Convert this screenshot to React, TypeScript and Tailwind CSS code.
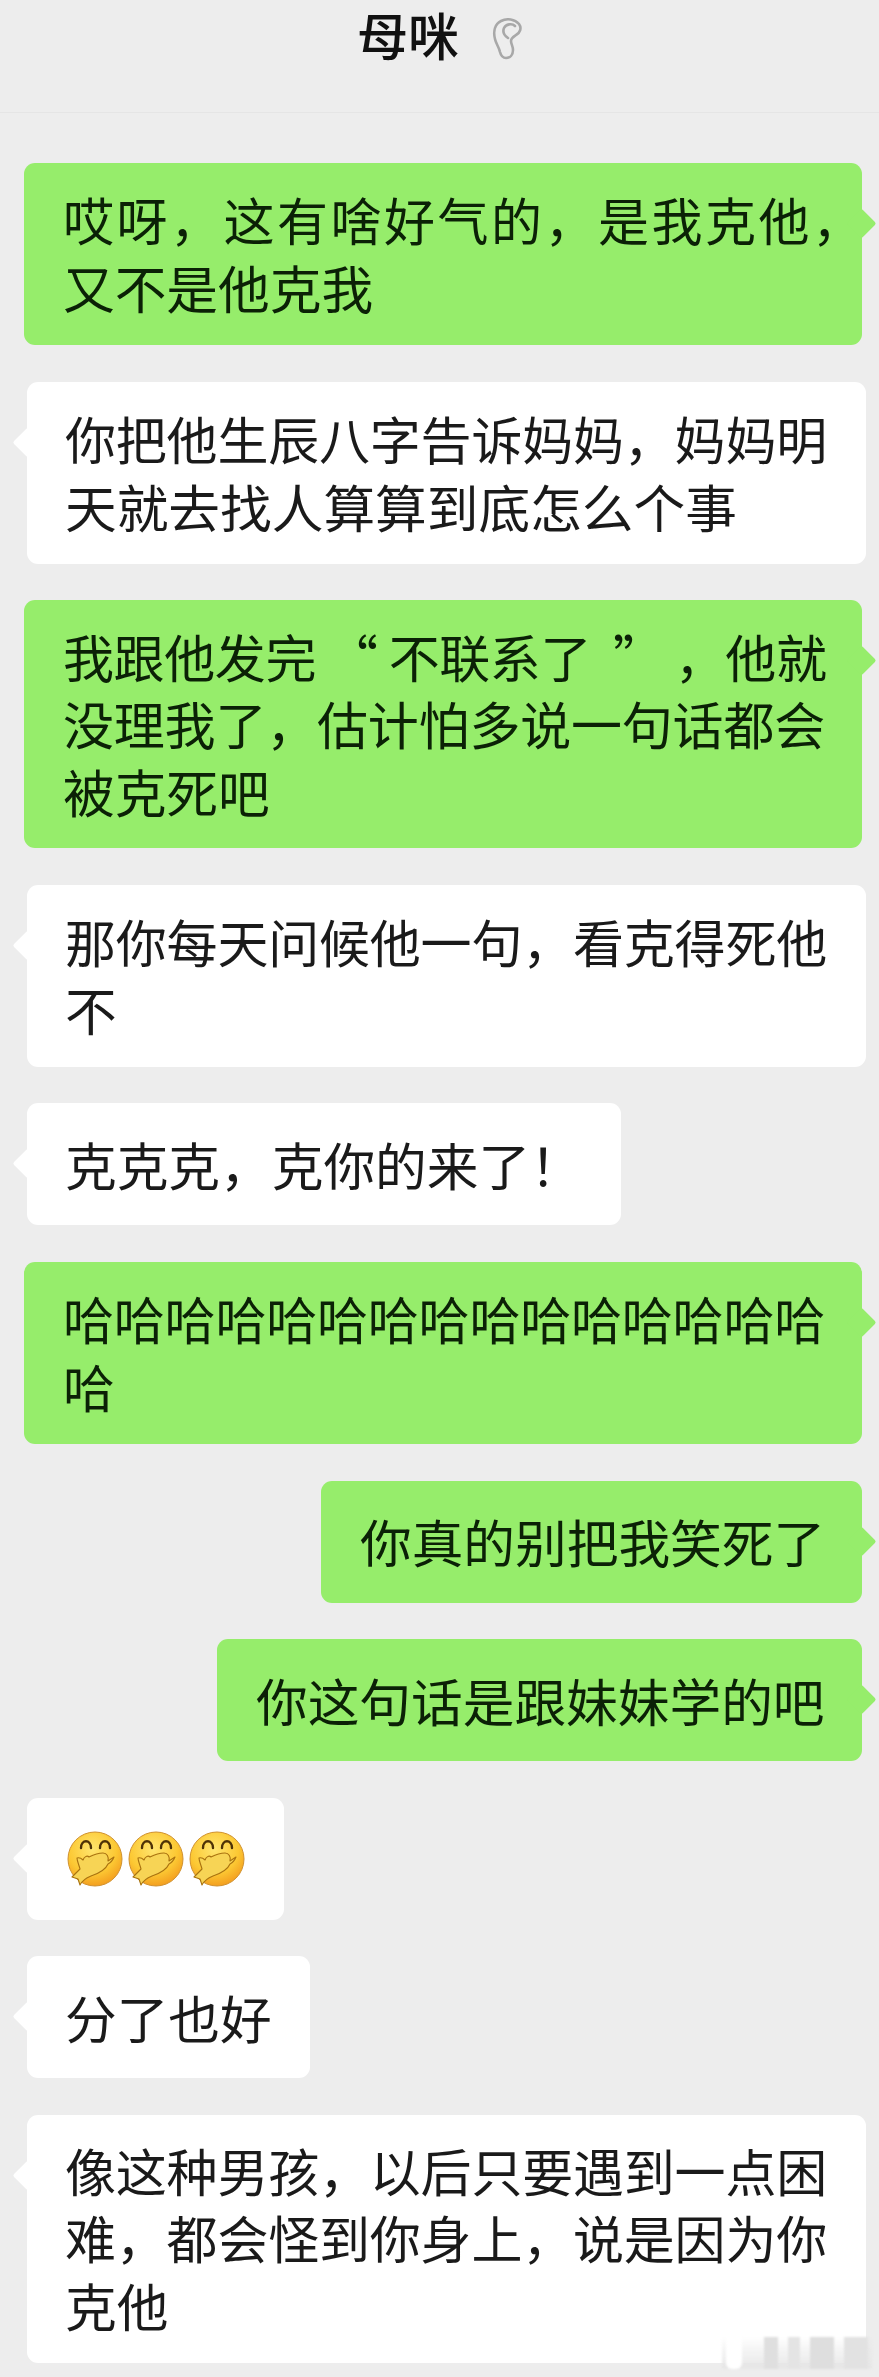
const FONT = "font-['Noto_Sans_CJK_SC','Noto_Sans',sans-serif]";

// full-width punctuation, written as escapes so it cannot get normalised
const C = "\uFF0C";
const E = "\uFF01";

type Msg = {
  side: "me" | "her";
  lines?: string[];
  width: string;
  emoji?: boolean;
  firstLine?: string;
};

const messages: Msg[] = [
  { side: "me", width: "w-[838px]", firstLine: "tracking-[2.5px]", lines: [`哎呀${C}这有啥好气的${C}是我克他${C}`, "又不是他克我"] },
  { side: "her", width: "w-[839px]", lines: [`你把他生辰八字告诉妈妈${C}妈妈明`, "天就去找人算算到底怎么个事"] },
  { side: "me", width: "w-[838px]", firstLine: "tracking-[-0.4px]", lines: [`我跟他发完 “ 不联系了  ” ${C}他就`, `没理我了${C}估计怕多说一句话都会`, "被克死吧"] },
  { side: "her", width: "w-[839px]", lines: [`那你每天问候他一句${C}看克得死他`, "不"] },
  { side: "her", width: "w-[594px]", lines: [`克克克${C}克你的来了${E}`] },
  { side: "me", width: "w-[838px]", lines: ["哈哈哈哈哈哈哈哈哈哈哈哈哈哈哈", "哈"] },
  { side: "me", width: "w-[541px]", lines: ["你真的别把我笑死了"] },
  { side: "me", width: "w-[645px]", lines: ["你这句话是跟妹妹学的吧"] },
  { side: "her", width: "w-[257px]", emoji: true },
  { side: "her", width: "w-[283px]", lines: ["分了也好"] },
  { side: "her", width: "w-[839px]", lines: [`像这种男孩${C}以后只要遇到一点困`, `难${C}都会怪到你身上${C}说是因为你`, "克他"] },
];

const HandOverMouth = ({ id }: { id: string }) => (
  <svg viewBox="0 0 56 56" className="h-[56px] w-[56px]">
    <defs>
      <radialGradient id={id} cx="45%" cy="32%" r="72%">
        <stop offset="0%" stopColor="#ffe56e" />
        <stop offset="62%" stopColor="#fcc833" />
        <stop offset="100%" stopColor="#f2981c" />
      </radialGradient>
    </defs>
    <circle cx="28" cy="28" r="27" fill={`url(#${id})`} stroke="#d0912e" strokeWidth="1" />
    <path d="M14 17C14 8 24 8 24 17M33 17C33 8 43 8 43 17" fill="none" stroke="#4e3206" strokeWidth="2.4" strokeLinecap="round" />
    <path
      d="M5 46L13 38C12 34 10 30 10 27C13 26 15 28 16 29C17 26 20 24 22 26C26 24 32 22 36 22C40 22 42 26 41 30L47 26C45 31 43 32 41 33C38 40 30 43 24 45C19 47 15 50 13 54L11 48Z"
      fill="#f7d455"
      stroke="#a9720f"
      strokeWidth="1.1"
      strokeLinejoin="round"
    />
  </svg>
);

const Bubble = ({ msg, index }: { msg: Msg; index: number }) => {
  const me = msg.side === "me";
  const lines = msg.lines ?? [];
  return (
    <div
      className={`relative rounded-[11px] ${msg.width} ${
        me ? "mr-[17px] self-end bg-[#96ed6b] pl-[39px] text-[#0b2106]" : "ml-[27px] self-start bg-white pl-[38px] text-[#1a1a1a]"
      } ${lines.length <= 1 ? "py-[27.5px]" : lines.length === 2 ? "py-[24px]" : "py-[23.5px]"}`}
    >
      <div
        className={`absolute top-[50px] h-[21px] w-[21px] rotate-45 rounded-[2px] ${
          me ? "right-[-10px] bg-[#96ed6b]" : "left-[-10px] bg-white"
        }`}
      />
      {msg.emoji ? (
        <div className="relative flex h-[67px] items-center gap-[5px] pl-[2px]">
          <HandOverMouth id={`face-${index}-a`} />
          <HandOverMouth id={`face-${index}-b`} />
          <HandOverMouth id={`face-${index}-c`} />
        </div>
      ) : (
        <div className="relative mt-[-1px] mb-[1px] leading-[67px] whitespace-pre">
          {lines.map((line, i) => (
            <div
              key={line}
              className={
                i === lines.length - 1
                  ? "text-[51.7px]"
                  : i === 0 && msg.firstLine
                    ? `text-[51px] ${msg.firstLine}`
                    : "text-[51px] tracking-[-0.2px]"
              }
            >
              {line}
            </div>
          ))}
        </div>
      )}
    </div>
  );
};

export default function App() {
  return (
    <div className={`${FONT} relative h-[2377px] w-[879px] overflow-hidden bg-[#ededed]`}>
      <header className="flex h-[113px] items-start justify-center border-b border-[#e5e5e5]">
        <h1 className="text-[51px] leading-[68px] font-medium text-[#111111]">母咪</h1>
        <svg viewBox="0 0 30 42" className="mt-[18px] ml-[33px] h-[42px] w-[30px]" fill="none" stroke="#a8a8a8" strokeWidth="2.6" strokeLinecap="round" strokeLinejoin="round">
          <path d="M3 21C1 13 3 6 9 3c6-3 14-2 18 3 3 4 1 9-3 11-3 2-5 3-5 6 0 3 2 5 2 9 0 5-3 8-7 8-3 0-5-2-6-6-1-5-4-8-5-13z" />
          <path d="M23 8c-3-3-9-2-11 2-2 5 1 8 4 10" />
        </svg>
      </header>
      <main className="flex flex-col gap-[36.6px] pt-[50px]">
        {messages.map((msg, i) => (
          <Bubble key={i} msg={msg} index={i} />
        ))}
      </main>
      {/* faint site watermark over the last bubble */}
      <div className="absolute top-[2337px] left-[722px] flex h-[32px] w-[150px] gap-[10px] bg-gradient-to-t from-[#e6e6e6] to-transparent blur-[1px]">
        <div className="ml-[4px] h-full w-[16px] rounded-b-[6px] bg-white" />
        <div className="ml-[12px] h-full w-[14px] bg-[#dfdfdf]" />
        <div className="h-full w-[12px] bg-[#e4e4e4]" />
        <div className="h-full w-[24px] bg-[#dedede]" />
        <div className="h-full w-[24px] bg-[#e2e2e2]" />
      </div>
    </div>
  );
}
